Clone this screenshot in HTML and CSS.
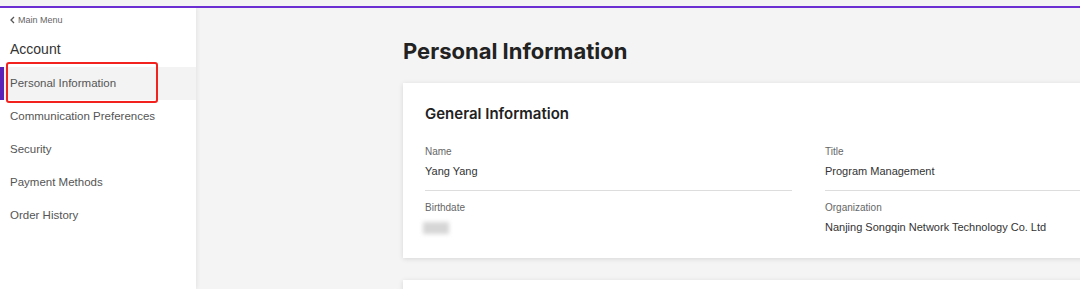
FILE: index.html
```html
<!DOCTYPE html>
<html lang="en">
<head>
  <meta charset="UTF-8">
  <title>Account - Personal Information</title>
  <link rel="stylesheet" href="styles.css">
</head>
<body>

  <div class="topbar"></div>

  <div class="layout">
    <!-- Sidebar Navigation -->
    <nav class="sidebar">
      <a class="back" href="#">
        <svg class="chevron" width="5" height="8" viewBox="0 0 5 8"><path d="M4 1L1 4l3 3" fill="none" stroke="#555" stroke-width="1.3"/></svg>
        Main Menu
      </a>
      <div class="section-title">Account</div>
      <ul class="menu">
        <li class="active">Personal Information</li>
        <li>Communication Preferences</li>
        <li>Security</li>
        <li>Payment Methods</li>
        <li>Order History</li>
      </ul>
      <div class="highlight"></div>
    </nav>

    <!-- Main Content -->
    <main class="content">
      <h1>Personal Information</h1>

      <div class="card">
        <h2>General Information</h2>
        <div class="fields">
          <div class="field">
            <div class="label">Name</div>
            <div class="value">Yang Yang</div>
          </div>
          <div class="field">
            <div class="label">Title</div>
            <div class="value">Program Management</div>
          </div>
          <div class="field last">
            <div class="label">Birthdate</div>
            <div class="value"><span class="blurred"></span></div>
          </div>
          <div class="field last">
            <div class="label">Organization</div>
            <div class="value">Nanjing Songqin Network Technology Co. Ltd</div>
          </div>
        </div>
      </div>

      <div class="card next"></div>
    </main>
  </div>

</body>
</html>
```

FILE: styles.css
```css
body {
  margin: 0;
  background-color: #f4f4f4;
  font-family: "Liberation Sans", Arial, sans-serif;
  overflow: hidden;
  height: 289px;
}

.topbar {
  height: 6px;
  border-bottom: 2px solid #6b2fd2;
}

.layout {
  display: flex;
  height: 281px;
  overflow: hidden;
}

/* Sidebar */
.sidebar {
  position: relative;
  width: 196px;
  flex-shrink: 0;
  background-color: #fff;
  box-shadow: 1px 0 4px rgba(0, 0, 0, 0.07);
  padding-top: 6px;
}

.back {
  display: flex;
  align-items: center;
  gap: 3px;
  padding-left: 10px;
  font-size: 9px;
  line-height: 12px;
  color: #666;
  text-decoration: none;
}

.section-title {
  margin: 13px 0 8px;
  padding-left: 10px;
  font-size: 14px;
  line-height: 20px;
  color: #333;
}

.menu {
  list-style: none;
  margin: 0;
  padding: 0;
}

.menu li {
  height: 33px;
  line-height: 33px;
  padding-left: 10px;
  font-size: 11.5px;
  color: #555;
}

.menu li.active {
  background-color: #f3f3f3;
  box-shadow: inset 4px 0 0 #5b22b8;
}

.highlight {
  position: absolute;
  left: 6px;
  top: 54px;
  width: 148px;
  height: 37px;
  border: 2px solid #f2221e;
  border-radius: 3px;
}

/* Main */
.content {
  flex: 1;
  min-width: 0;
  padding: 29px 0 0 207px;
}

h1 {
  margin: 0 0 18px;
  font-family: Inter, "Liberation Sans", sans-serif;
  font-size: 22px;
  line-height: 28px;
  font-weight: 700;
  color: #222;
}

.card {
  width: 767px;
  background-color: #fff;
  padding: 21px 22px 23px;
  box-shadow: 0 1px 5px rgba(0, 0, 0, 0.12);
}

.card.next {
  margin-top: 22px;
  height: 40px;
  padding: 0;
  width: 811px;
}

h2 {
  margin: 0;
  font-family: Inter, "Liberation Sans", sans-serif;
  font-size: 15px;
  line-height: 20px;
  font-weight: 600;
  color: #222;
}

.fields {
  display: grid;
  grid-template-columns: 367px 367px;
  column-gap: 33px;
  margin-top: 21px;
}

.field {
  padding-bottom: 11px;
  border-bottom: 1px solid #ddd;
}

.field.last {
  padding-top: 10px;
  padding-bottom: 0;
  border-bottom: none;
}

.label {
  font-size: 10px;
  line-height: 14px;
  color: #666;
}

.value {
  margin-top: 4px;
  height: 16px;
  font-size: 11px;
  line-height: 16px;
  color: #333;
}

.blurred {
  display: inline-block;
  width: 26px;
  height: 12px;
  margin-left: -2px;
  margin-top: 3px;
  background-color: #d6d6d6;
  filter: blur(2px);
}
```
